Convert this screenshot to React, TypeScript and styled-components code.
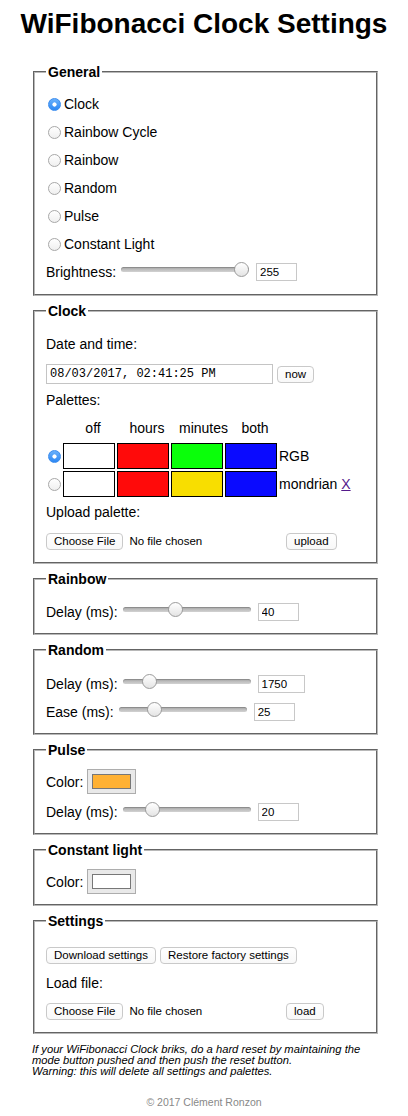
import React from "react";
import styled, { createGlobalStyle, css } from "styled-components";

const GlobalStyle = createGlobalStyle`
  html, body {
    margin: 0;
    padding: 0;
    background: #fff;
  }
  body {
    font-family: "Liberation Sans", Arial, Helvetica, sans-serif;
    font-size: 14px;
    color: #000;
  }
`;

const uiFont = css`
  font-family: "Liberation Sans", Arial, Helvetica, sans-serif;
  font-size: 11.5px;
  color: #000;
`;

const buttonLook = css`
  ${uiFont};
  box-sizing: border-box;
  height: 17px;
  padding: 0 7px;
  line-height: 15px;
  background: linear-gradient(#ffffff, #f8f8f8);
  border: 1px solid #c9c9c9;
  border-radius: 4px;
`;

// 페이지
const Page = styled.div`
  width: 408px;
  padding-bottom: 8px;
`;

const Title = styled.h1`
  margin: 8px 0 24px;
  font-size: 28px;
  line-height: 32px;
  font-weight: bold;
  text-align: center;
`;

// 섹션 (fieldset)
const Section = styled.fieldset<{ $pt: number; $pb: number }>`
  margin: 0 30px 7px 33px;
  padding: ${(p) => p.$pt}px 11px ${(p) => p.$pb}px;
  border: 2px groove #b8b8b8;
  min-width: 0;
`;

const Legend = styled.legend`
  padding: 0 2px;
  font-weight: bold;
  line-height: 16px;
`;

const RadioRow = styled.label`
  display: flex;
  align-items: center;
  height: 28px;
`;

const Radio = styled.input.attrs({ type: "radio" })`
  appearance: none;
  -webkit-appearance: none;
  box-sizing: border-box;
  width: 13px;
  height: 13px;
  margin: 0 3px 0 2px;
  border-radius: 50%;
  border: 1px solid #a8a8a8;
  background: linear-gradient(#ffffff, #efefef);
  &:checked {
    border-color: #3a8cee;
    background: radial-gradient(circle, #fff 0 1.8px, transparent 2.4px),
      linear-gradient(#69b0fb, #2c88f4);
  }
`;

const PaletteRadio = styled(Radio)`
  margin: 0 2px;
`;

const Row = styled.div<{ $mt?: number }>`
  display: flex;
  align-items: center;
  height: 20px;
  margin-top: ${(p) => p.$mt ?? 0}px;
`;

const TallRow = styled(Row)`
  height: 25px;
`;

const Caption = styled.div<{ $mt: number }>`
  line-height: 16px;
  margin-top: ${(p) => p.$mt}px;
`;

const Slider = styled.input.attrs({ type: "range" })`
  -webkit-appearance: none;
  appearance: none;
  width: 128px;
  height: 15px;
  margin: 0 7px 6px 5px;
  padding: 0;
  background: transparent;
  &::-webkit-slider-runnable-track {
    height: 5px;
    border-radius: 3px;
    background: linear-gradient(#a9a9a9, #d2d2d2);
    box-shadow: inset 0 1px 1px rgba(0, 0, 0, 0.2);
  }
  &::-webkit-slider-thumb {
    -webkit-appearance: none;
    box-sizing: border-box;
    width: 15px;
    height: 15px;
    margin-top: -5px;
    border-radius: 50%;
    border: 1px solid #9b9b9b;
    background: linear-gradient(#ffffff, #e4e4e4);
  }
`;

const NumberBox = styled.input<{ $w: number }>`
  ${uiFont};
  box-sizing: border-box;
  width: ${(p) => p.$w}px;
  height: 18px;
  margin: 0;
  padding: 0 3px;
  border: 1px solid #c8c8c8;
  outline: none;
`;

const DateBox = styled.input`
  box-sizing: border-box;
  width: 227px;
  height: 20px;
  margin: 0;
  padding: 0 3px;
  border: 1px solid #c4c4c4;
  font-family: "Liberation Mono", "Courier New", monospace;
  font-size: 12px;
  color: #000;
  outline: none;
`;

const Button = styled.button<{ $ml?: number }>`
  ${buttonLook};
  margin: 0 0 0 ${(p) => p.$ml ?? 0}px;
`;

const FileInput = styled.input.attrs({ type: "file" })`
  ${uiFont};
  width: 236px;
  height: 17px;
  margin: 0;
  padding: 0;
  &::file-selector-button {
    ${buttonLook};
    margin: 0 6px 0 0;
  }
`;

const ColorInput = styled.input.attrs({ type: "color" })`
  -webkit-appearance: none;
  appearance: none;
  box-sizing: border-box;
  width: 49px;
  height: 25px;
  margin: 0 0 0 4px;
  padding: 0;
  border: 1px solid #adadad;
  background: #e9e9e9;
  &::-webkit-color-swatch-wrapper {
    padding: 4px;
  }
  &::-webkit-color-swatch {
    border: 1px solid #777;
  }
`;

// 팔레트
const PaletteHead = styled.div`
  display: grid;
  grid-template-columns: repeat(4, 52px);
  column-gap: 2px;
  margin: 12px 0 0 17px;
  line-height: 16px;
`;

const HeadCell = styled.div`
  padding-left: 8px;
  text-align: center;
`;

const PaletteList = styled.div`
  display: flex;
  flex-direction: column;
  gap: 2px;
  margin-top: 7px;
`;

const PaletteRow = styled.label`
  display: flex;
  align-items: center;
  height: 26px;
`;

const Swatches = styled.div`
  display: flex;
  gap: 2px;
`;

const Swatch = styled.div<{ $color: string }>`
  box-sizing: border-box;
  width: 52px;
  height: 26px;
  border: 1px solid #000;
  background: ${(p) => p.$color};
`;

const PaletteName = styled.span`
  margin-left: 2px;
`;

const DeleteLink = styled.a`
  color: #551a8b;
  text-decoration: underline;
`;

const ButtonRow = styled.div`
  display: flex;
  gap: 4px;
  margin-top: 18px;
`;

const FileRow = styled.div<{ $mt: number }>`
  display: flex;
  align-items: center;
  margin-top: ${(p) => p.$mt}px;
`;

// 하단
const Note = styled.p`
  margin: 10px 0 0 32px;
  font-size: 11.2px;
  line-height: 11px;
  font-style: italic;
`;

const Copy = styled.div`
  margin-top: 19px;
  text-align: center;
  font-size: 10.5px;
  line-height: 12px;
  color: #888;
`;

const modes = ["Clock", "Rainbow Cycle", "Rainbow", "Random", "Pulse", "Constant Light"];

const palettes = [
  { name: "RGB", colors: ["#ffffff", "#ff0a0a", "#0aff0a", "#0a0aff"], removable: false },
  { name: "mondrian", colors: ["#ffffff", "#ff0a0a", "#f8de00", "#0a0aff"], removable: true },
];

type SliderFieldProps = {
  label: string;
  value: number;
  max: number;
  boxWidth?: number;
  mt?: number;
};
const SliderField = ({ label, value, max, boxWidth = 41, mt }: SliderFieldProps) => (
  <Row $mt={mt}>
    <span>{label}</span>
    <Slider min={0} max={max} defaultValue={value} />
    <NumberBox type="text" $w={boxWidth} defaultValue={value} />
  </Row>
);

const App = () => {
  return (
    <Page>
      <GlobalStyle />
      <Title>WiFibonacci Clock Settings</Title>

      {/* General */}
      <Section $pt={10} $pb={12}>
        <Legend>General</Legend>
        {modes.map((m, i) => (
          <RadioRow key={m}>
            <Radio name="mode" defaultChecked={i === 0} />
            {m}
          </RadioRow>
        ))}
        <SliderField label="Brightness:" value={255} max={255} mt={4} />
      </Section>

      {/* Clock */}
      <Section $pt={0} $pb={12}>
        <Legend>Clock</Legend>
        <Caption $mt={17}>Date and time:</Caption>
        <Row $mt={12}>
          <DateBox type="text" defaultValue="08/03/2017, 02:41:25 PM" />
          <Button $ml={4}>now</Button>
        </Row>
        <Caption $mt={8}>Palettes:</Caption>
        <PaletteHead>
          <HeadCell>off</HeadCell>
          <HeadCell>hours</HeadCell>
          <HeadCell>minutes</HeadCell>
          <HeadCell>both</HeadCell>
        </PaletteHead>
        <PaletteList>
          {palettes.map((p, i) => (
            <PaletteRow key={p.name}>
              <PaletteRadio name="palette" defaultChecked={i === 0} />
              <Swatches>
                {p.colors.map((c, j) => (
                  <Swatch key={j} $color={c} />
                ))}
              </Swatches>
              <PaletteName>
                {p.name}
                {p.removable && (
                  <>
                    {" "}
                    <DeleteLink href="#">X</DeleteLink>
                  </>
                )}
              </PaletteName>
            </PaletteRow>
          ))}
        </PaletteList>
        <Caption $mt={7}>Upload palette:</Caption>
        <FileRow $mt={13}>
          <FileInput />
          <Button $ml={4}>upload</Button>
        </FileRow>
      </Section>

      {/* Rainbow */}
      <Section $pt={15} $pb={11}>
        <Legend>Rainbow</Legend>
        <SliderField label="Delay (ms):" value={40} max={100} />
      </Section>

      {/* Random */}
      <Section $pt={16} $pb={11}>
        <Legend>Random</Legend>
        <SliderField label="Delay (ms):" value={1750} max={10000} boxWidth={47} />
        <SliderField label="Ease (ms):" value={25} max={100} mt={8} />
      </Section>

      {/* Pulse */}
      <Section $pt={11} $pb={11}>
        <Legend>Pulse</Legend>
        <TallRow>
          <span>Color:</span>
          <ColorInput defaultValue="#ffb133" />
        </TallRow>
        <SliderField label="Delay (ms):" value={20} max={100} mt={8} />
      </Section>

      {/* Constant light */}
      <Section $pt={11} $pb={10}>
        <Legend>Constant light</Legend>
        <TallRow>
          <span>Color:</span>
          <ColorInput defaultValue="#ffffff" />
        </TallRow>
      </Section>

      {/* Settings */}
      <Section $pt={0} $pb={12}>
        <Legend>Settings</Legend>
        <ButtonRow>
          <Button>Download settings</Button>
          <Button>Restore factory settings</Button>
        </ButtonRow>
        <Caption $mt={11}>Load file:</Caption>
        <FileRow $mt={12}>
          <FileInput />
          <Button $ml={4}>load</Button>
        </FileRow>
      </Section>

      <Note>
        If your WiFibonacci Clock briks, do a hard reset by maintaining the
        <br />
        mode button pushed and then push the reset button.
        <br />
        Warning: this will delete all settings and palettes.
      </Note>
      <Copy>© 2017 Clément Ronzon</Copy>
    </Page>
  );
};

export default App;
